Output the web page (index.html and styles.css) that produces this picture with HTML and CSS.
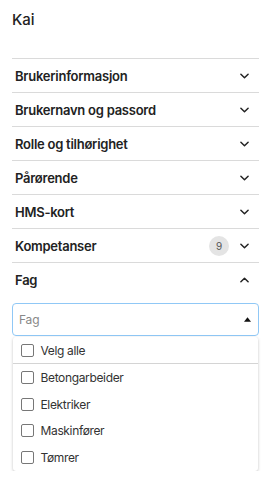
FILE: index.html
```html
<!DOCTYPE html>
<html lang="no">
<head>
<meta charset="utf-8">
<link rel="stylesheet" href="styles.css">
</head>
<body>
<div class="page">
  <h1 class="title">Kai</h1>
  <div class="accordion">
    <div class="row"><span class="label">Brukerinformasjon</span><span class="right"><svg class="chev" viewBox="0 0 10 6"><path d="M1 1l4 4 4-4"/></svg></span></div>
    <div class="row"><span class="label">Brukernavn og passord</span><span class="right"><svg class="chev" viewBox="0 0 10 6"><path d="M1 1l4 4 4-4"/></svg></span></div>
    <div class="row"><span class="label">Rolle og tilhørighet</span><span class="right"><svg class="chev" viewBox="0 0 10 6"><path d="M1 1l4 4 4-4"/></svg></span></div>
    <div class="row"><span class="label">Pårørende</span><span class="right"><svg class="chev" viewBox="0 0 10 6"><path d="M1 1l4 4 4-4"/></svg></span></div>
    <div class="row"><span class="label">HMS-kort</span><span class="right"><svg class="chev" viewBox="0 0 10 6"><path d="M1 1l4 4 4-4"/></svg></span></div>
    <div class="row"><span class="label">Kompetanser</span><span class="right"><span class="badge">9</span><svg class="chev" viewBox="0 0 10 6"><path d="M1 1l4 4 4-4"/></svg></span></div>
    <div class="row open"><span class="label">Fag</span><span class="right"><svg class="chev" viewBox="0 0 10 6"><path d="M1 5l4-4 4 4"/></svg></span></div>
  </div>
  <div class="select">
    <span class="placeholder">Fag</span>
    <svg class="tri" viewBox="0 0 8 5"><path d="M0 5L4 0l4 5z"/></svg>
  </div>
  <div class="menu">
    <div class="opt all"><span class="box"></span>Velg alle</div>
    <div class="opt"><span class="box"></span>Betongarbeider</div>
    <div class="opt"><span class="box"></span>Elektriker</div>
    <div class="opt"><span class="box"></span>Maskinfører</div>
    <div class="opt"><span class="box"></span>Tømrer</div>
  </div>
</div>
</body>
</html>
```
FILE: styles.css
```css
* { box-sizing: border-box; }
html, body { margin: 0; padding: 0; background: #fff; }
body { font-family: Inter, "Noto Sans", sans-serif; color: #222; }
.page { padding: 0 18px 0 12px; }
.title { margin: 0; padding-top: 10px; font-size: 15px; line-height: 20px; font-weight: 500; margin-bottom: 28px; }
.row { height: 34px; border-top: 1px solid #dadada; display: flex; align-items: center; justify-content: space-between; padding: 0 10px 0 3px; }
.label { font-size: 13px; font-weight: 600; color: #222; letter-spacing: -0.25px; }
.right { display: flex; align-items: center; gap: 11px; }
.chev { width: 9px; height: 6px; fill: none; stroke: #222; stroke-width: 1.6; stroke-linecap: round; stroke-linejoin: round; }
.badge { width: 20px; height: 20px; border-radius: 50%; background: #e4e4e4; color: #555; font-size: 10px; display: flex; align-items: center; justify-content: center; }
.select { margin-top: 7px; height: 33px; border: 1px solid #90c8f6; border-radius: 4px; display: flex; align-items: center; justify-content: space-between; padding: 0 7px 0 6px; }
.placeholder { font-size: 12px; color: #888; letter-spacing: -0.2px; }
.tri { width: 7px; height: 5px; fill: #111; }
.menu { margin: 1px 1px 0 0.5px; border-radius: 3px; box-shadow: 0 1px 3px rgba(0,0,0,0.25); background: #fff; }
.opt { height: 26.7px; display: flex; align-items: center; padding-left: 8px; font-size: 12px; color: #333; gap: 7px; letter-spacing: -0.35px; }
.opt.all { height: 27px; border-bottom: 1px solid #d4d4d4; }
.box { width: 13px; height: 13px; border: 1px solid #777; border-radius: 2px; flex: none; }
```
